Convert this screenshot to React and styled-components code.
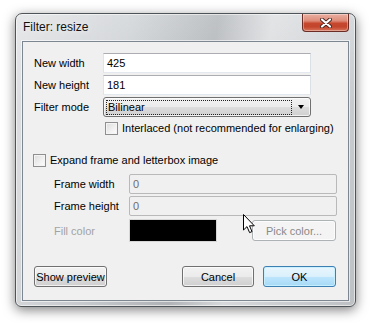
import React from 'react';
import styled, { createGlobalStyle } from 'styled-components';

const GlobalStyle = createGlobalStyle`
	html, body {
		margin: 0;
		padding: 0;
		background: #ffffff;
	}
	body {
		font-family: "Liberation Sans", Arial, sans-serif;
		font-size: 11px;
		color: #000;
	}
`;

const Page = styled.div`
	width: 371px;
	height: 323px;
	padding: 13px 0 0 15px;
	box-sizing: border-box;
	position: relative;
`;

const Window = styled.div`
	width: 341px;
	height: 294px;
	box-sizing: border-box;
	border: 1px solid #4f5458;
	border-radius: 7px 7px 6px 6px;
	background:
		linear-gradient(100deg, rgba(255,255,255,0.4) 0%, rgba(255,255,255,0.05) 30%, rgba(0,0,0,0.1) 52%, rgba(255,255,255,0.3) 66%, rgba(0,0,0,0.03) 100%),
		linear-gradient(180deg, #d6d9dc 0%, #c9cccf 30%, #c4c7ca 100%);
	box-shadow: inset 0 0 0 1px rgba(255,255,255,0.55), 0 3px 12px rgba(0,0,0,0.5);
	padding: 0 6px 5px 6px;
	display: flex;
	flex-direction: column;
`;

const TitleBar = styled.div`
	height: 27px;
	display: flex;
	justify-content: space-between;
	align-items: flex-start;
`;

const Title = styled.div`
	font-size: 12px;
	line-height: 27px;
	color: #111;
	padding-left: 1px;
	text-shadow: 0 0 6px rgba(255,255,255,0.9);
`;

const CloseButton = styled.div`
	width: 45px;
	height: 17px;
	border: 1px solid #6a2c24;
	border-top: none;
	border-radius: 0 0 4px 4px;
	background: linear-gradient(180deg, #eab0a3 0%, #de8c79 40%, #c6472d 55%, #c2452c 75%, #d8745a 100%);
	box-shadow: inset 0 0 0 1px rgba(255,255,255,0.35);
	display: flex;
	align-items: center;
	justify-content: center;
`;

const Client = styled.div`
	flex: 1;
	background: #f0f0f0;
	border: 1px solid #7d8791;
	box-shadow: 0 0 0 1px rgba(255,255,255,0.6);
	padding: 11px 12px 13px 11px;
	display: flex;
	flex-direction: column;
`;

const FormGrid = styled.div`
	display: grid;
	grid-template-columns: ${(p) => p.labelWidth}px 208px;
	row-gap: 2px;
	align-items: center;
	margin-left: ${(p) => p.indent || 0}px;
	margin-top: ${(p) => p.top || 0}px;
`;

const Label = styled.div`
	color: ${(p) => (p.disabled ? '#a3a3a3' : '#000')};
	line-height: 20px;
	white-space: nowrap;
	width: ${(p) => (p.bare ? '0' : 'auto')};
`;

const TextBox = styled.div`
	height: 20px;
	box-sizing: border-box;
	border: 1px solid;
	border-color: ${(p) => (p.disabled ? '#b9b9b9' : '#abadb3 #dbdfe6 #e3e9ef #e2e3ea')};
	border-radius: ${(p) => (p.disabled ? '2px' : '0')};
	background: ${(p) => (p.disabled ? '#f0f0f0' : '#ffffff')};
	color: ${(p) => (p.disabled ? '#6d6d6d' : '#000')};
	padding: 0 3px;
	line-height: 18px;
`;

const Combo = styled.div`
	height: 20px;
	box-sizing: border-box;
	border: 1px solid #707070;
	border-radius: 3px;
	background: linear-gradient(180deg, #f2f2f2 0%, #ebebeb 50%, #dddddd 51%, #cfcfcf 100%);
	box-shadow: inset 0 0 0 1px rgba(255,255,255,0.7);
	display: flex;
	align-items: center;
	padding: 0 3px 0 2px;
	gap: 6px;
`;

const FocusText = styled.div`
	flex: 1;
	height: 13px;
	border: 1px dotted #222;
	line-height: 13px;
	padding-left: 1px;
`;

const ComboArrow = styled.div`
	width: 0;
	height: 0;
	border-left: 3.5px solid transparent;
	border-right: 3.5px solid transparent;
	border-top: 4px solid #000;
	margin-right: 3px;
`;

const CheckRow = styled.label`
	display: flex;
	align-items: center;
	gap: 4px;
	margin-top: ${(p) => p.top}px;
	margin-left: ${(p) => p.indent || 0}px;
	height: 14px;
	color: #000;
`;

const CheckBox = styled.span`
	width: 13px;
	height: 13px;
	box-sizing: border-box;
	border: 1px solid #8e8f8f;
	background: linear-gradient(135deg, #dcdcdc 0%, #f1f1f1 60%, #ffffff 100%);
	box-shadow: inset 0 0 0 1px #f4f4f4;
	flex: none;
`;

const FillRow = styled.div`
	display: flex;
	align-items: center;
	margin-top: 3px;
	margin-left: 20px;
`;

const ColorSwatch = styled.div`
	width: 88px;
	height: 23px;
	box-sizing: border-box;
	border: 1px solid #d6d6d6;
	background: ${(p) => p.color};
	margin-left: 75px;
	margin-right: 35px;
`;

const Button = styled.div`
	width: ${(p) => p.width}px;
	height: 21px;
	box-sizing: border-box;
	border: 1px solid ${(p) => (p.disabled ? '#adb2b5' : p.primary ? '#3c7fb1' : '#707070')};
	border-radius: 3px;
	background: ${(p) =>
		p.disabled
			? '#f4f4f4'
			: p.primary
			? 'linear-gradient(180deg, #eaf6fd 0%, #d9f0fc 50%, #bee6fd 51%, #a7d9f5 100%)'
			: 'linear-gradient(180deg, #f2f2f2 0%, #ebebeb 50%, #dddddd 51%, #cfcfcf 100%)'};
	box-shadow: inset 0 0 0 1px ${(p) => (p.primary ? 'rgba(200,240,255,0.9)' : 'rgba(255,255,255,0.7)')};
	color: ${(p) => (p.disabled ? '#8a8a8a' : '#000')};
	display: flex;
	align-items: center;
	justify-content: center;
	font-size: 11px;
	white-space: nowrap;
`;

const ButtonBar = styled.div`
	margin-top: auto;
	display: flex;
	align-items: center;
`;

const Spacer = styled.div`
	flex: 1;
`;

const RightButtons = styled.div`
	display: flex;
	gap: 9px;
`;

const Cursor = styled.svg`
	position: absolute;
	left: 243px;
	top: 214px;
`;

function CloseGlyph() {
	return (
		<svg width="12" height="10" viewBox="0 0 12 10">
			<path d="M2 1.5 L10 8.5 M10 1.5 L2 8.5" stroke="#4a2620" strokeWidth="4" strokeLinecap="round" />
			<path d="M2 1.5 L10 8.5 M10 1.5 L2 8.5" stroke="#ffffff" strokeWidth="2.2" strokeLinecap="round" />
		</svg>
	);
}

export default function App() {
	return (
		<Page>
			<GlobalStyle />
			<Window>
				<TitleBar>
					<Title>Filter: resize</Title>
					<CloseButton><CloseGlyph /></CloseButton>
				</TitleBar>
				<Client>
					<FormGrid labelWidth={69}>
						<Label>New width</Label>
						<TextBox>425</TextBox>
						<Label>New height</Label>
						<TextBox>181</TextBox>
						<Label>Filter mode</Label>
						<Combo>
							<FocusText>Bilinear</FocusText>
							<ComboArrow />
						</Combo>
					</FormGrid>
					<CheckRow top={4} indent={71}>
						<CheckBox />
						<span>Interlaced (not recommended for enlarging)</span>
					</CheckRow>
					<CheckRow top={18} indent={-1}>
						<CheckBox />
						<span>Expand frame and letterbox image</span>
					</CheckRow>
					<FormGrid labelWidth={75} indent={20} top={7}>
						<Label>Frame width</Label>
						<TextBox disabled>0</TextBox>
						<Label>Frame height</Label>
						<TextBox disabled>0</TextBox>
					</FormGrid>
					<FillRow>
						<Label disabled bare>Fill color</Label>
						<ColorSwatch color="#000000" />
						<Button disabled width={84}>Pick color...</Button>
					</FillRow>
					<ButtonBar>
						<Button width={73}>Show preview</Button>
						<Spacer />
						<RightButtons>
							<Button width={72}>Cancel</Button>
							<Button primary width={73}>OK</Button>
						</RightButtons>
					</ButtonBar>
				</Client>
			</Window>
			<Cursor width="13" height="20" viewBox="0 0 13 20">
				<path d="M0.5 0.5 L0.5 16 L4 12.6 L6.6 18.6 L9 17.6 L6.5 11.8 L11.3 11.8 Z" fill="#ffffff" stroke="#000000" strokeWidth="1" strokeLinejoin="miter" />
			</Cursor>
		</Page>
	);
}
